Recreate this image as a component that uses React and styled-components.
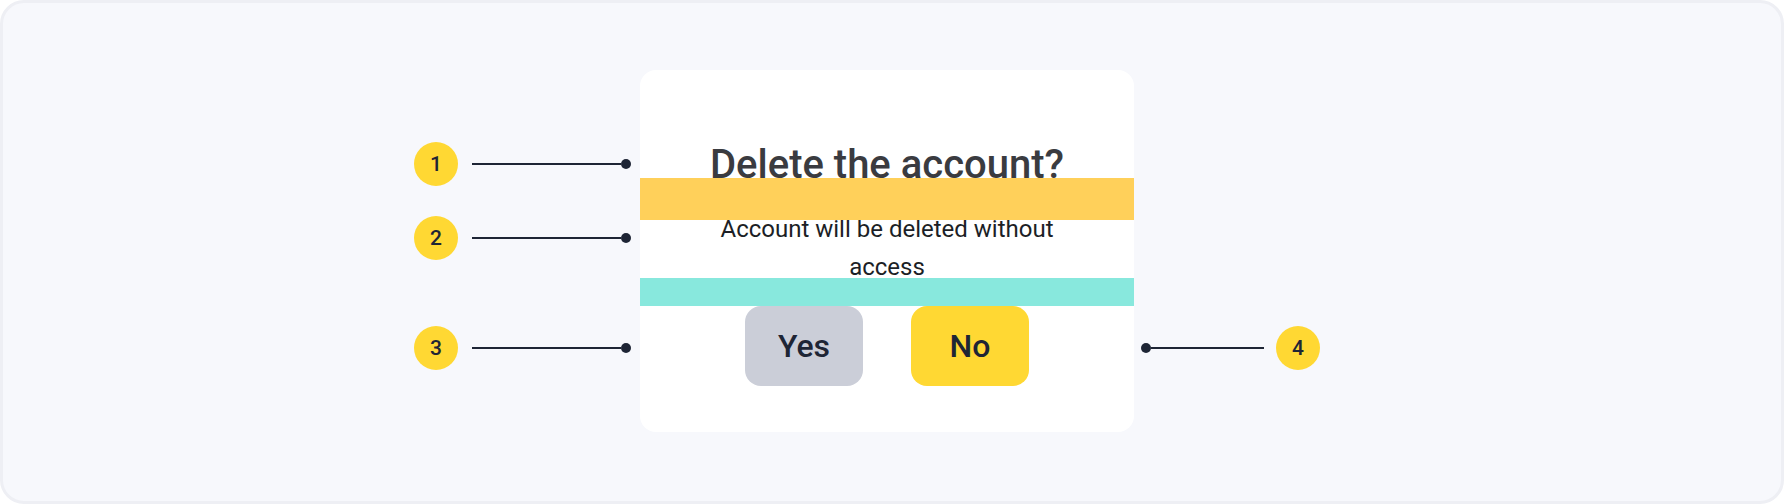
import React from "react";
import styled, { createGlobalStyle } from "styled-components";

const colors = {
  frame: "#f7f8fc",
  frameBorder: "#eeeff4",
  ink: "#1e2535",
  title: "#3a3b40",
  text: "#1c1f26",
  yellow: "#ffd833",
  grey: "#cbced8",
  margin: "#ffd05a",
  gap: "#88e8dd",
};

const GlobalStyle = createGlobalStyle`
  body {
    margin: 0;
    font-family: Roboto, "Noto Sans", sans-serif;
  }
`;

const App = () => {
  return (
    <>
      <GlobalStyle />
      <Frame>
        <Stage>
          <Card>
            <Title>Delete the account?</Title>
            <Text>Account will be deleted without access</Text>
            <Actions>
              <Button>Yes</Button>
              <Button primary>No</Button>
            </Actions>
            <Band top={108} height={42} color={colors.margin} />
            <Band top={208} height={28} color={colors.gap} />
          </Card>

          <Callout side="left" top={72} line={149}>
            <Badge>1</Badge>
            <Line />
            <Dot />
          </Callout>
          <Callout side="left" top={146} line={149}>
            <Badge>2</Badge>
            <Line />
            <Dot />
          </Callout>
          <Callout side="left" top={256} line={149}>
            <Badge>3</Badge>
            <Line />
            <Dot />
          </Callout>
          <Callout side="right" top={256} line={113}>
            <Dot />
            <Line />
            <Badge>4</Badge>
          </Callout>
        </Stage>
      </Frame>
    </>
  );
};

export default App;

const Frame = styled.div`
  box-sizing: border-box;
  width: 100%;
  height: 504px;
  background-color: ${colors.frame};
  border: 3px solid ${colors.frameBorder};
  border-radius: 24px;
  display: flex;
  align-items: center;
  justify-content: center;
  padding: 0 10px 2px 0;
`;

const Stage = styled.div`
  position: relative;
`;

const Card = styled.div`
  position: relative;
  box-sizing: border-box;
  width: 494px;
  padding: 71px 0 46px;
  background-color: #ffffff;
  border-radius: 16px;
  display: flex;
  flex-direction: column;
  align-items: center;
`;

const Title = styled.h2`
  margin: 0;
  font-size: 40px;
  line-height: 48px;
  font-weight: 500;
  color: ${colors.title};
`;

const Text = styled.p`
  margin: 21px 0 20px;
  max-width: 360px;
  text-align: center;
  font-size: 24px;
  line-height: 1.6;
  color: ${colors.text};
`;

const Actions = styled.div`
  display: flex;
  gap: 48px;
`;

const Button = styled.button`
  width: 118px;
  height: 80px;
  border: none;
  border-radius: 16px;
  background-color: ${(p) => (p.primary ? colors.yellow : colors.grey)};
  color: ${colors.ink};
  font-family: Roboto, sans-serif;
  font-size: 32px;
  font-weight: 500;
  cursor: pointer;
`;

/* spacing highlights drawn over the dialog */
const Band = styled.div`
  position: absolute;
  left: 0;
  right: 0;
  top: ${(p) => p.top}px;
  height: ${(p) => p.height}px;
  background-color: ${(p) => p.color};
`;

const Callout = styled.div`
  position: absolute;
  top: ${(p) => p.top}px;
  ${(p) =>
    p.side === "left" ? "right: calc(100% + 9px);" : "left: calc(100% + 7px);"}
  display: flex;
  align-items: center;

  & > span:first-child {
    margin-right: ${(p) => (p.side === "left" ? "14px" : "0")};
  }
  & > span:last-child {
    margin-left: ${(p) => (p.side === "right" ? "12px" : "0")};
  }
  & > i {
    width: ${(p) => p.line}px;
  }
`;

const Badge = styled.span`
  width: 44px;
  height: 44px;
  border-radius: 50%;
  background-color: ${colors.yellow};
  color: ${colors.ink};
  font-size: 21px;
  font-weight: 500;
  display: flex;
  align-items: center;
  justify-content: center;
`;

const Line = styled.i`
  display: block;
  height: 2px;
  background-color: ${colors.ink};
`;

const Dot = styled.b`
  display: block;
  width: 10px;
  height: 10px;
  border-radius: 50%;
  background-color: ${colors.ink};
`;
